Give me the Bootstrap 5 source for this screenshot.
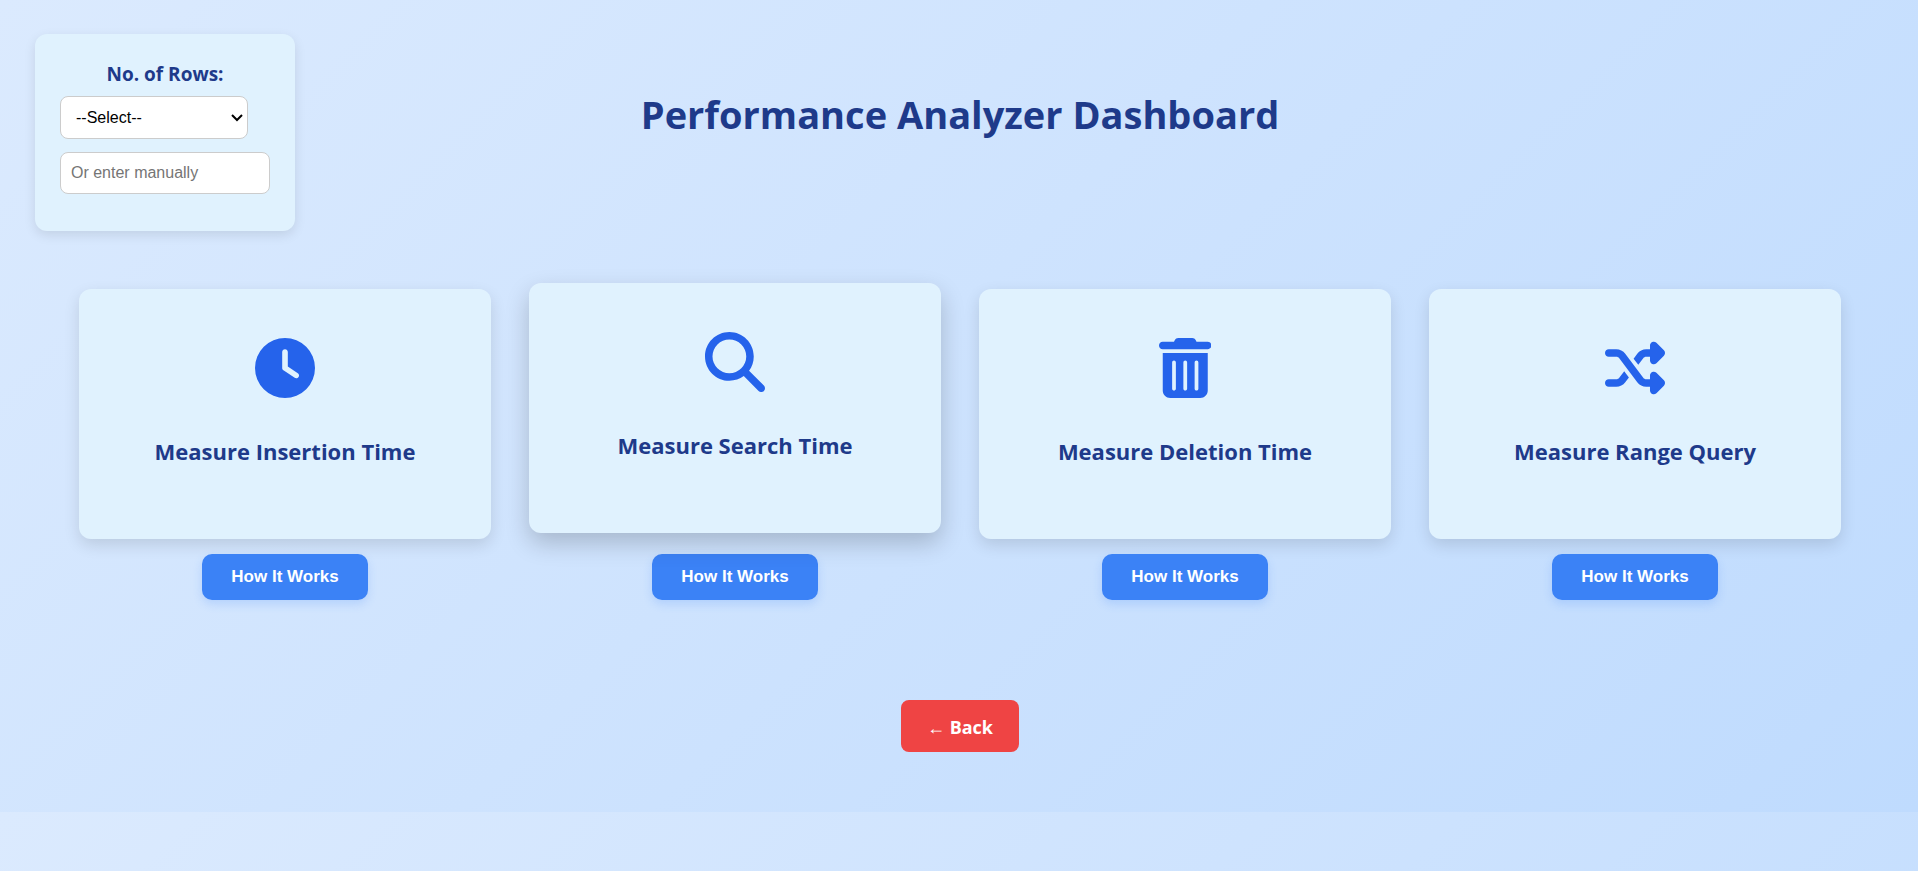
<!DOCTYPE html>
<html lang="en">
<head>
<meta charset="utf-8">
<meta name="viewport" content="width=device-width, initial-scale=1">
<title>Performance Analyzer Dashboard</title>
<link href="https://cdn.jsdelivr.net/npm/bootstrap@5.3.0/dist/css/bootstrap.min.css" rel="stylesheet">
<style>
  body {
    background: linear-gradient(135deg, #dbeafe, #bfdbfe);
    color: #1e3a8a;
    font-family: "Segoe UI", "Open Sans", "Noto Sans", sans-serif;
  }
  .page { padding: 34px 33px 60px 35px; }
  .page-head { display: grid; grid-template-columns: 260px 1fr 260px; }
  .page-title { font-size: 38px; line-height: 48px; margin-top: 56px; font-weight: 700; }
  .rows-panel {
    min-height: 197px;
    padding: 26px 25px;
    background: #e0f2fe;
    border-radius: 12px;
    box-shadow: 0 4px 12px rgba(0, 0, 0, .1);
  }
  .rows-label { font-size: 19px; line-height: 28px; margin-bottom: 8px; font-weight: 700; }
  .rows-field {
    font-family: Arial, "Liberation Sans", sans-serif;
    font-size: 16px;
    padding: 10px;
    color: #000;
    background: #fff;
    border: 1px solid #ccc;
    border-radius: 8px;
  }
  .rows-field::placeholder { color: #757575; }
  .rows-select {
    width: 188px;
    height: 43px;
    margin-bottom: 13px;
    padding: 9px 10px 11px 15px;
    appearance: none;
    background: #fff url("data:image/svg+xml,%3Csvg xmlns='http://www.w3.org/2000/svg' width='12' height='8' fill='none' stroke='black' stroke-width='2'%3E%3Cpath d='M1 1l5 5 5-5'/%3E%3C/svg%3E") no-repeat right 4px center;
  }
  .rows-input { width: 210px; height: 42px; }
  .tools { gap: 38px; padding: 58px 44px 0; }
  .tool { flex: 1 1 0; min-width: 320px; }
  .tool-card {
    min-height: 250px;
    padding: 49px 20px 20px;
    background: #e0f2fe;
    border-radius: 12px;
    box-shadow: 0 6px 16px rgba(0, 0, 0, .12);
    color: inherit;
  }
  .tool-card.lifted { transform: translateY(-6px); box-shadow: 0 10px 24px rgba(0, 0, 0, .2); }
  .tool-card svg { height: 60px; fill: #2563eb; }
  .tool-name { font-size: 22px; line-height: 32px; margin: 37px 0 0; font-weight: 700; }
  .how-btn {
    font: bold 17px/26px Arial, "Liberation Sans", sans-serif;
    width: 166px;
    padding: 10px 0;
    margin-top: 15px;
    color: #fff;
    background: #3b82f6;
    border: 0;
    border-radius: 10px;
    box-shadow: 0 4px 10px rgba(59, 130, 246, .2);
  }
  .back-btn {
    font-size: 18px;
    line-height: 28px;
    font-weight: 700;
    padding: 13px 26px 11px;
    margin-top: 100px;
    color: #fff;
    background: #ef4444;
    border: 0;
    border-radius: 8px;
  }
  .how-btn:hover, .back-btn:hover { color: #fff; filter: brightness(.95); }
</style>
</head>
<body>
<main class="page">
  <header class="page-head">
    <form class="rows-panel d-flex flex-column align-items-start">
      <label class="rows-label align-self-center" for="rows">No. of Rows:</label>
      <select class="rows-field rows-select" id="rows"><option>--Select--</option></select>
      <input class="rows-field rows-input" type="text" placeholder="Or enter manually" aria-label="Enter number of rows manually">
    </form>
    <h1 class="page-title text-center mb-0">Performance Analyzer Dashboard</h1>
  </header>

  <section class="tools d-flex flex-wrap">
    <div class="tool d-flex flex-column align-items-center">
      <a href="#insertion" class="tool-card w-100 text-center text-decoration-none">
        <svg viewBox="0 0 512 512" aria-hidden="true"><path d="M256 0a256 256 0 1 1 0 512A256 256 0 1 1 256 0zM232 120V256c0 8 4 15.500 10.700 20l96 64c11 7.400 25.900 4.400 33.300-6.700s4.400-25.900-6.700-33.300L280 243.200V120c0-13.300-10.700-24-24-24s-24 10.700-24 24z"/></svg>
        <h2 class="tool-name">Measure Insertion Time</h2>
      </a>
      <button type="button" class="btn how-btn">How It Works</button>
    </div>
    <div class="tool d-flex flex-column align-items-center">
      <a href="#search" class="tool-card lifted w-100 text-center text-decoration-none">
        <svg viewBox="0 0 512 512" aria-hidden="true"><path d="M416 208c0 45.900-14.900 88.300-40 122.700L502.600 457.400c12.500 12.500 12.500 32.800 0 45.300s-32.800 12.500-45.300 0L330.700 376c-34.400 25.200-76.800 40-122.700 40C93.100 416 0 322.900 0 208S93.100 0 208 0S416 93.100 416 208zM208 352a144 144 0 1 0 0-288 144 144 0 1 0 0 288z"/></svg>
        <h2 class="tool-name">Measure Search Time</h2>
      </a>
      <button type="button" class="btn how-btn">How It Works</button>
    </div>
    <div class="tool d-flex flex-column align-items-center">
      <a href="#deletion" class="tool-card w-100 text-center text-decoration-none">
        <svg viewBox="0 0 448 512" aria-hidden="true"><path d="M135.200 17.700C140.600 6.800 151.700 0 163.800 0H284.200c12.100 0 23.200 6.800 28.600 17.700L320 32h96c17.700 0 32 14.300 32 32s-14.300 32-32 32H32C14.300 96 0 81.700 0 64S14.300 32 32 32h96l7.200-14.300zM32 128H416V448c0 35.300-28.700 64-64 64H96c-35.300 0-64-28.700-64-64V128zm96 64c-8.800 0-16 7.200-16 16V432c0 8.800 7.200 16 16 16s16-7.200 16-16V208c0-8.800-7.200-16-16-16zm96 0c-8.800 0-16 7.200-16 16V432c0 8.800 7.200 16 16 16s16-7.200 16-16V208c0-8.800-7.200-16-16-16zm96 0c-8.800 0-16 7.200-16 16V432c0 8.800 7.200 16 16 16s16-7.200 16-16V208c0-8.800-7.200-16-16-16z"/></svg>
        <h2 class="tool-name">Measure Deletion Time</h2>
      </a>
      <button type="button" class="btn how-btn">How It Works</button>
    </div>
    <div class="tool d-flex flex-column align-items-center">
      <a href="#range" class="tool-card w-100 text-center text-decoration-none">
        <svg viewBox="0 0 512 512" aria-hidden="true"><path d="M403.800 34.400c12-5 25.700-2.200 34.900 6.900l64 64c6 6 9.400 14.100 9.400 22.600s-3.400 16.600-9.400 22.600l-64 64c-9.200 9.200-22.900 11.900-34.900 6.900s-19.800-16.600-19.800-29.600V160H352c-10.100 0-19.600 4.700-25.600 12.800L284 229.300 244 176l31.200-41.600C293.300 110.200 321.800 96 352 96h32V64c0-12.900 7.800-24.600 19.800-29.600zM164 282.700L204 336l-31.200 41.600C154.700 401.800 126.200 416 96 416H32c-17.700 0-32-14.300-32-32s14.300-32 32-32H96c10.100 0 19.600-4.700 25.600-12.800L164 282.700zm274.600 188c-9.200 9.200-22.900 11.900-34.900 6.900s-19.800-16.600-19.800-29.600V416H352c-30.200 0-58.700-14.200-76.800-38.400L121.600 172.800c-6-8.100-15.500-12.800-25.600-12.800H32c-17.700 0-32-14.300-32-32s14.300-32 32-32H96c30.200 0 58.700 14.200 76.800 38.400L326.400 339.200c6 8.100 15.500 12.800 25.600 12.800h32V320c0-12.900 7.800-24.600 19.800-29.600s25.700-2.200 34.900 6.900l64 64c6 6 9.400 14.100 9.400 22.600s-3.400 16.600-9.400 22.600l-64 64z"/></svg>
        <h2 class="tool-name">Measure Range Query</h2>
      </a>
      <button type="button" class="btn how-btn">How It Works</button>
    </div>
  </section>

  <div class="d-flex justify-content-center">
    <button type="button" class="btn back-btn">← Back</button>
  </div>
</main>
<script src="https://cdn.jsdelivr.net/npm/bootstrap@5.3.0/dist/js/bootstrap.bundle.min.js"></script>
</body>
</html>
